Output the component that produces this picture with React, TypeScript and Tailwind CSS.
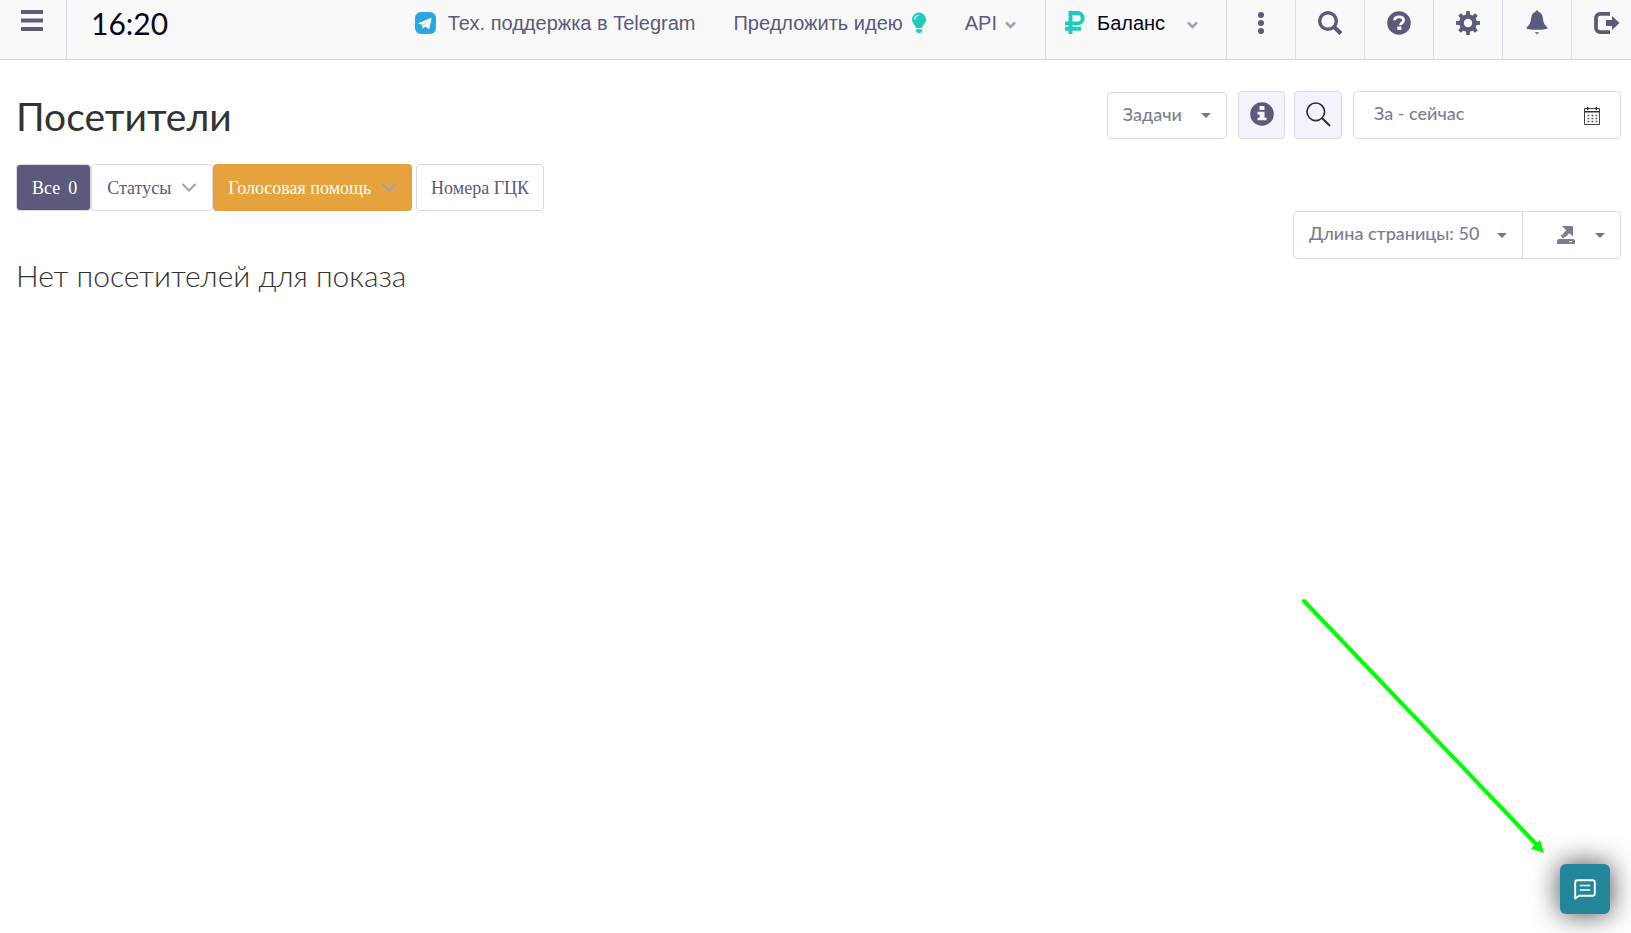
import type { ReactNode } from "react";

const museo = "font-['Lato','Open_Sans',sans-serif]";
const arial = "font-['Liberation_Sans',Arial,sans-serif]";
const serif = "font-['Liberation_Serif','Times_New_Roman',serif]";

function MenuIcon() {
  return (
    <svg width="22" height="22" viewBox="0 0 22 22" fill="currentColor" aria-hidden="true">
      <path d="M0 0h22v4H0zM0 8.5h22v4H0zM0 17h22v4H0z" />
    </svg>
  );
}

function TelegramIcon() {
  return (
    <svg width="21" height="22" viewBox="0 0 21 22" aria-hidden="true">
      <rect width="21" height="22" rx="6" fill="#2aa7e2" />
      <path d="M3.300 11.200 15.600 6c.6-.2 1 .1.9.8l-2 9.500c-.2.7-.7.9-1.300.5l-3.100-2.400-1.600 1.600c-.4.4-.8.3-.9-.2l-.7-3.100-3.500-1.100c-.6-.2-.6-.3-.1-.4z" fill="#fff" />
      <path d="m7.600 12.700 6.500-4.500-5 5.500-.3 2.100z" fill="#b9dcee" />
    </svg>
  );
}

function BulbIcon() {
  return (
    <svg width="16" height="22" viewBox="0 0 16 22" aria-hidden="true">
      <path d="M8 .5a7 7 0 0 1 7 7c0 4-3.500 5.300-4 8.500H5c-.5-3.200-4-4.500-4-8.500a7 7 0 0 1 7-7z" fill="#1fcbbd" />
      <path d="M3.800 7.400C3.800 5 5.500 3.500 7.800 3.500" fill="none" stroke="#fff" strokeWidth="1.200" />
      <path d="M5 17.200h6v1.600l-1.400 2.200H6.400L5 18.800z" fill="#1fcbbd" />
    </svg>
  );
}

function SmallChevron() {
  return (
    <svg width="11" height="8" viewBox="0 0 11 8" fill="none" stroke="#a3a3b8" strokeWidth="2.600" aria-hidden="true">
      <path d="M1 1.500 5.500 6 10 1.500" />
    </svg>
  );
}

function Chevron() {
  return (
    <svg width="14" height="9" viewBox="0 0 14 9" fill="none" stroke="#9f9fb6" strokeWidth="2" strokeLinecap="round" aria-hidden="true">
      <path d="M1 1.500 7 7.500 13 1.500" />
    </svg>
  );
}

function Caret() {
  return (
    <svg width="10" height="5" viewBox="0 0 10 5" fill="#767689" aria-hidden="true">
      <path d="M0 0h10L5 5z" />
    </svg>
  );
}

function RubleIcon() {
  return (
    <svg width="20" height="23" viewBox="0 0 20 23" fill="none" stroke="#1fcbbd" strokeWidth="4" aria-hidden="true">
      <path d="M5.500 23V2H12.500a5.200 5.200 0 0 1 0 10.400H0M0 17.800h16" />
    </svg>
  );
}

function DotsIcon() {
  return (
    <svg width="8" height="22" viewBox="0 0 8 22" fill="currentColor" aria-hidden="true">
      <circle cx="4" cy="3" r="3" />
      <circle cx="4" cy="11" r="3" />
      <circle cx="4" cy="19" r="3" />
    </svg>
  );
}

function SearchIcon() {
  return (
    <svg width="25" height="24" viewBox="0 0 25 24" fill="none" stroke="currentColor" aria-hidden="true">
      <circle cx="10" cy="10" r="8.300" strokeWidth="3.400" />
      <path d="m16 16 7 6.500" strokeWidth="4.200" />
    </svg>
  );
}

function QuestionIcon() {
  return (
    <svg width="24" height="24" viewBox="0 0 24 24" aria-hidden="true">
      <circle cx="12" cy="12" r="11.800" fill="currentColor" />
      <path d="M7.600 9.300C7.600 6.800 9.500 5.900 12 5.900s4.600 1 4.600 3.400c0 2.500-3.100 2.700-3.100 5" fill="none" stroke="#f9f9f9" strokeWidth="2.800" />
      <path d="M10.300 15.500h4V19h-4z" fill="#f9f9f9" />
    </svg>
  );
}

const gearTeeth = "M10.300 0h3.400l.6 5H9.700zM10.300 24h3.400l.6-5H9.700z";

function GearIcon() {
  return (
    <svg width="24" height="24" viewBox="0 0 24 24" aria-hidden="true">
      <g fill="currentColor">
        <path d={gearTeeth} />
        <path d={gearTeeth} transform="rotate(45 12 12)" />
        <path d={gearTeeth} transform="rotate(90 12 12)" />
        <path d={gearTeeth} transform="rotate(135 12 12)" />
      </g>
      <circle cx="12" cy="12" r="6.500" fill="none" stroke="currentColor" strokeWidth="4.600" />
    </svg>
  );
}

function BellIcon() {
  return (
    <svg width="22" height="25" viewBox="0 0 22 25" fill="currentColor" aria-hidden="true">
      <path d="M11 0.500c.9 0 1.400.5 1.500 1.300 2.700.9 3.900 3 4.300 5.900.6 4 1.100 6 2.700 7.900 1 1.200 2.100 1.900 2.100 2.900-1.600 1-6.100 1.300-10.600 1.300S2 19.500.4 18.500c0-1 1.100-1.700 2.100-2.900 1.600-1.900 2.100-3.900 2.700-7.900.4-2.900 1.600-5 4.300-5.900.1-.8.600-1.300 1.500-1.300z" />
      <path d="M8.800 22.200h4.400L11 24.600z" />
    </svg>
  );
}

function ExitIcon() {
  return (
    <svg width="26" height="22" viewBox="0 0 26 22" aria-hidden="true">
      <path d="M16 1.900H6A4 4 0 0 0 2 5.900v10.200a4 4 0 0 0 4 4h10" fill="none" stroke="currentColor" strokeWidth="3.800" />
      <path d="M12 8h6V4l7.500 7-7.500 7v-4h-6z" fill="currentColor" />
    </svg>
  );
}

function InfoIcon() {
  return (
    <svg width="24" height="24" viewBox="0 0 24 24" aria-hidden="true">
      <circle cx="12" cy="12" r="11.800" fill="#5b5a7b" />
      <path d="M9.500 4h5v4h-5zM7.500 9.800h7v6h2v2.400h-9v-2.400h2v-3.400h-2z" fill="#f3f3fb" />
    </svg>
  );
}

function ThinSearchIcon() {
  return (
    <svg width="25" height="25" viewBox="0 0 25 25" fill="none" stroke="#2d2d2d" aria-hidden="true">
      <circle cx="9.800" cy="9.800" r="8.800" strokeWidth="1.700" />
      <path d="m16 16 8 8" strokeWidth="2" />
    </svg>
  );
}

function CalendarIcon() {
  return (
    <svg width="16" height="18" viewBox="0 0 16 18" aria-hidden="true">
      <path d="M.5 1.500h15v16H.5z" fill="none" stroke="#444" />
      <path d="M0 4h16v1.500H0zM3 0h1.500v3H3zM11.500 0H13v3h-1.500z" fill="#333" />
      <path d="M3.500 8.500h10M3.500 11.500h10M3.500 14.500h10" stroke="#555" strokeWidth="1.500" strokeDasharray="1.800 2.200" />
    </svg>
  );
}

function ExportIcon() {
  return (
    <svg width="18" height="19" viewBox="0 0 18 19" fill="#7d7d92" aria-hidden="true">
      <path d="M5 0h11v10.500l-3.500-3.200L8 11.500 5.200 8.700l4-4.400z" />
      <path d="M3.500 10 5 8.500l2.500 2.700-1.400 1.300z" />
      <path d="M1.500 13h15L18 14.500V18H0v-3.500zM12.500 15v1.200H15V15z" fillRule="evenodd" />
    </svg>
  );
}

function ChatIcon() {
  return (
    <svg width="22" height="21" viewBox="0 0 22 21" fill="none" stroke="#fff" strokeLinecap="round" strokeLinejoin="round" aria-hidden="true">
      <path d="M1.200 19.500V3.500a2.300 2.300 0 0 1 2.300-2.300h15a2.300 2.300 0 0 1 2.300 2.300v11a2.300 2.300 0 0 1-2.300 2.300H5z" strokeWidth="1.900" />
      <path d="M6.500 6.500h9M6.500 11h9" strokeWidth="1.700" />
    </svg>
  );
}

function IconCell({ label, children }: { label: string; children: ReactNode }) {
  return (
    <button aria-label={label} className="flex h-full w-[69px] items-center justify-center border-l border-[#d9dce6] pb-[14px]">
      {children}
    </button>
  );
}

function Header() {
  return (
    <header className={`flex h-[60px] border-b border-[#d9dce6] bg-[#f9f9f9] text-xl text-[#5b5a7b] ${arial}`}>
      <button aria-label="Меню" className="flex w-[67px] items-center justify-center border-r border-[#d9dce6] pr-[2px] pb-[18px]">
        <MenuIcon />
      </button>
      <time className={`pt-1 pl-6 text-[30px] leading-[38px] text-[#04041a] ${museo}`}>16:20</time>
      <nav className="ml-auto flex items-center gap-[38px] pr-[29px] pb-[14px]">
        <a href="#telegram" className="flex items-center gap-3">
          <TelegramIcon />
          Тех. поддержка в Telegram
        </a>
        <a href="#idea" className="flex items-center gap-2">
          Предложить идею
          <BulbIcon />
        </a>
        <button className="flex items-center gap-2">
          API
          <span className="pt-1">
            <SmallChevron />
          </span>
        </button>
      </nav>
      <button className="flex w-[181px] items-center border-l border-[#d9dce6] px-[19px] pb-[14px] text-[#04041a]">
        <RubleIcon />
        <span className="pl-3">Баланс</span>
        <span className="pt-1 pl-[22px]">
          <SmallChevron />
        </span>
      </button>
      <IconCell label="Ещё"><DotsIcon /></IconCell>
      <IconCell label="Поиск"><SearchIcon /></IconCell>
      <IconCell label="Помощь"><QuestionIcon /></IconCell>
      <IconCell label="Настройки"><GearIcon /></IconCell>
      <IconCell label="Уведомления"><BellIcon /></IconCell>
      <button aria-label="Выход" className="flex w-[60px] items-center border-l border-[#d9dce6] pb-[14px] pl-[22px]">
        <ExitIcon />
      </button>
    </header>
  );
}

function Toolbar() {
  return (
    <div className={`flex h-12 items-end text-lg font-medium text-[#7d7d92] ${museo}`}>
      <button className="flex h-[47px] items-center rounded border border-[#d9dce6] bg-white px-[15px]">
        <span className="pb-1">Задачи</span>
        <span className="pl-[19px]">
          <Caret />
        </span>
      </button>
      <button aria-label="Информация" className="ml-[11px] flex h-12 w-[47px] items-center justify-center rounded border border-[#d9dce6] bg-[#f3f3fb] pb-[2px]">
        <InfoIcon />
      </button>
      <button aria-label="Найти" className="ml-[9px] flex h-12 w-12 items-center justify-center rounded border border-[#d9dce6] bg-[#f3f3fb] pb-[2px]">
        <ThinSearchIcon />
      </button>
      <label className="ml-[11px] flex h-12 w-[268px] items-center rounded border border-[#d9dce6] bg-white pr-5 pl-5">
        <input aria-label="Период" defaultValue="За - сейчас" className="h-full min-w-0 flex-1 bg-transparent pb-1 outline-none" />
        <span className="pt-[2px]">
          <CalendarIcon />
        </span>
      </label>
    </div>
  );
}

function Filters() {
  return (
    <div className={`flex h-[47px] text-lg text-[#5b5a7b] ${serif}`}>
      <button className="flex items-center gap-2 rounded border border-[#d9dce6] bg-[#5b5a7b] pr-[13px] pl-[15px] text-white">
        <span>Все</span>
        <span>0</span>
      </button>
      <button className="flex items-center gap-[11px] rounded border border-[#d9dce6] bg-white pr-4 pl-[15px]">
        Статусы
        <Chevron />
      </button>
      <button className="flex items-center gap-[11px] rounded bg-[#e6a23c] pr-4 pl-[15px] text-white">
        Голосовая помощь
        <Chevron />
      </button>
      <button className="ml-1 rounded border border-[#d9dce6] bg-white px-[14px]">Номера ГЦК</button>
    </div>
  );
}

function PageControls() {
  return (
    <div className={`flex h-12 rounded border border-[#d9dce6] text-lg font-medium text-[#7d7d92] ${museo}`}>
      <div className="relative flex items-center">
        <select aria-label="Длина страницы" className="h-full w-[228px] appearance-none bg-transparent pr-9 pb-1 pl-[15px] outline-none">
          <option>Длина страницы: 50</option>
          <option>Длина страницы: 100</option>
        </select>
        <span className="pointer-events-none absolute right-[15px]">
          <Caret />
        </span>
      </div>
      <button aria-label="Экспорт" className="flex items-center gap-5 border-l border-[#d9dce6] pr-[15px] pl-[34px]">
        <ExportIcon />
        <Caret />
      </button>
    </div>
  );
}

export default function App() {
  return (
    <div className="relative flex min-h-screen flex-col bg-white">
      <Header />
      <main className="pr-[10px] pl-4">
        <div className="flex justify-between pt-[31px]">
          <h1 className={`text-[39px] leading-[50px] text-[#333] ${museo}`}>Посетители</h1>
          <Toolbar />
        </div>
        <div className="pt-[23px]">
          <Filters />
        </div>
        <div className="flex justify-between">
          <h2 className={`pt-11 text-[30px] leading-[40px] font-light text-[#333] ${museo}`}>
            Нет посетителей для показа
          </h2>
          <PageControls />
        </div>
      </main>
      <svg className="pointer-events-none absolute right-[86px] bottom-[79px]" width="246" height="259" viewBox="0 0 246 259" aria-hidden="true">
        <path d="M5 6 238 250" stroke="#00ff00" strokeWidth="4" strokeLinecap="round" />
        <path d="M245 258 232 253.500 241 245z" fill="#00ff00" />
      </svg>
      <button aria-label="Чат" className="fixed right-[21px] bottom-[19px] flex size-[50px] items-center justify-center rounded-[6px] bg-[#24869b] shadow-[0_0_28px_rgba(0,0,0,0.75)]">
        <ChatIcon />
      </button>
    </div>
  );
}
